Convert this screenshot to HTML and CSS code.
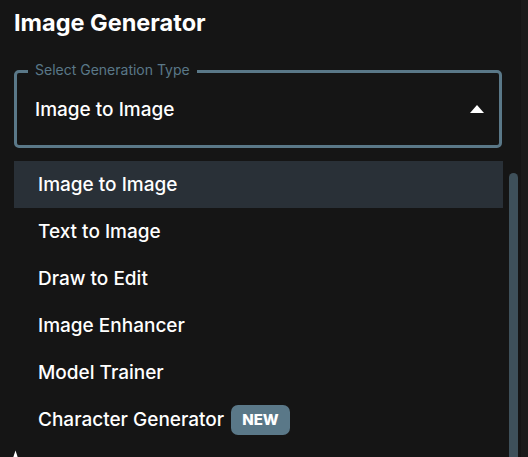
FILE: index.html
```html
<!DOCTYPE html>
<html lang="en">
<head>
  <meta charset="UTF-8">
  <meta name="viewport" content="width=device-width, initial-scale=1.0">
  <title>Image Generator</title>
  <link rel="stylesheet" href="styles.css">
</head>
<body>

<div class="page">
  <div class="main">
    <h1 class="title">Image Generator</h1>

    <div class="select">
      <span class="select-label">Select Generation Type</span>
      <div class="select-value">Image to Image</div>
      <span class="caret"></span>
    </div>

    <div class="menu">
      <ul class="menu-list">
        <li class="menu-item selected">Image to Image</li>
        <li class="menu-item">Text to Image</li>
        <li class="menu-item">Draw to Edit</li>
        <li class="menu-item">Image Enhancer</li>
        <li class="menu-item">Model Trainer</li>
        <li class="menu-item">Character Generator<span class="badge">NEW</span></li>
      </ul>
      <div class="menu-scroll">
        <div class="menu-thumb"></div>
      </div>
    </div>

    <!-- mouse pointer peeking in at the bottom -->
    <svg class="pointer" width="8" height="8" viewBox="0 0 8 8">
      <path d="M1 8 L3.5 0.5 L6 8 Z" fill="#fff"/>
    </svg>
  </div>
  <div class="page-track"></div>
</div>

</body>
</html>
```

FILE: styles.css
```css
body {
  font-family: Inter, "Noto Sans", sans-serif;
  margin: 0;
  padding: 0;
  background-color: #151515;
  color: #fff;
}

.page {
  display: flex;
  height: 457px;
  overflow: hidden;
}

.main {
  position: relative;
  flex: 1;
  padding: 0 0 0 14px;
}

.page-track {
  width: 7px;
  background-color: #1b1b1b;
}

.title {
  margin: 9px 0 0 0;
  font-size: 23.5px;
  font-weight: 700;
  line-height: 28px;
}

.select {
  position: relative;
  width: 488px;
  height: 78px;
  box-sizing: border-box;
  margin-top: 33px;
  padding-left: 18px;
  border: 3px solid #5a7888;
  border-radius: 5px;
  display: flex;
  align-items: center;
}

.select-label {
  position: absolute;
  left: 11px;
  top: -11px;
  padding: 0 7px;
  background-color: #151515;
  font-size: 14px;
  line-height: 16px;
  color: #5a7888;
}

.select-value {
  font-size: 19px;
  font-weight: 500;
}

.caret {
  position: absolute;
  right: 15px;
  top: 32px;
  width: 0;
  height: 0;
  border-left: 7px solid transparent;
  border-right: 7px solid transparent;
  border-bottom: 8px solid #fff;
}

.menu {
  display: flex;
  margin-top: 13px;
  gap: 6px;
}

.menu-list {
  list-style: none;
  margin: 0;
  padding: 0;
  width: 489px;
}

.menu-item {
  height: 47px;
  padding-left: 24px;
  display: flex;
  align-items: center;
  font-size: 19px;
  font-weight: 500;
}

.menu-item.selected {
  background-color: #293037;
}

.badge {
  margin-left: 7px;
  padding: 0 11px;
  height: 30px;
  line-height: 30px;
  border-radius: 7px;
  background-color: #5a7888;
  font-size: 15px;
  font-weight: 800;
}

.menu-scroll {
  width: 9px;
  padding-top: 12px;
}

.menu-thumb {
  height: 400px;
  background-color: #3e505a;
  border-radius: 5px 5px 0 0;
}

.pointer {
  position: absolute;
  left: 12px;
  top: 450px;
}
```
